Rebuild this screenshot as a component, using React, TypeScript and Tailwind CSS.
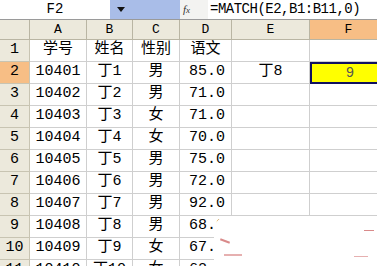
import React from "react";

const cols = [30, 57, 46, 47, 52, 78, 78];
const letters = ["A", "B", "C", "D", "E", "F"];

const data: string[][] = [
  ["学号", "姓名", "性别", "语文", "", ""],
  ["10401", "丁1", "男", "85.0", "丁8", "9"],
  ["10402", "丁2", "男", "71.0", "", ""],
  ["10403", "丁3", "女", "71.0", "", ""],
  ["10404", "丁4", "女", "70.0", "", ""],
  ["10405", "丁5", "男", "75.0", "", ""],
  ["10406", "丁6", "男", "72.0", "", ""],
  ["10407", "丁7", "男", "92.0", "", ""],
  ["10408", "丁8", "男", "68.0", "", ""],
  ["10409", "丁9", "女", "67.0", "", ""],
  ["10410", "丁10", "女", "62.0", "", ""],
];

const font = { fontFamily: '"Liberation Mono", "Noto Sans CJK SC", monospace' };

export default function App() {
  return (
    <div className="relative w-[377px] h-[266px] overflow-hidden bg-white text-black" style={font}>
      {/* formula bar */}
      <div className="flex h-[20px] border-b border-[#9a9a9a]">
        <div className="w-[110px] flex items-center justify-center text-[14px] bg-white">F2</div>
        <div className="w-[70px] bg-[#a9bde8] flex items-center pl-[7px]">
          <svg width="8" height="5" viewBox="0 0 8 5"><path d="M0 0h8L4 5z" fill="#111" /></svg>
        </div>
        <div className="w-[28px] flex items-center pl-[3px] bg-[#f3f3f1]">
          <span className="italic text-[11px] text-[#333]" style={{ fontFamily: '"Liberation Serif", serif' }}>
            f<span className="text-[9px]">x</span>
          </span>
        </div>
        <div className="flex-1 flex items-center pl-[2px] text-[14px] whitespace-nowrap tracking-[-0.5px]">
          =MATCH(E2,B1:B11,0)
        </div>
      </div>
      {/* header row */}
      <div className="flex h-[20px]">
        {cols.map((w, i) => (
          <div
            key={i}
            style={{ width: w, minWidth: w }}
            className={`flex items-center justify-center text-[13px] border-r border-b border-[#b9b5a3] ${
              i === 6 ? "bg-[#f7be85]" : "bg-[#ece9dc]"
            }`}
          >
            {i === 0 ? "" : letters[i - 1]}
          </div>
        ))}
      </div>
      {data.map((row, r) => (
        <div key={r} className="flex h-[22px]">
          <div
            style={{ width: cols[0], minWidth: cols[0] }}
            className={`flex items-center justify-center text-[15px] border-r border-b border-[#c8c4b2] ${
              r === 1 ? "bg-[#f7be85]" : "bg-[#ece9dc]"
            }`}
          >
            {r + 1}
          </div>
          {row.map((v, c) => {
            const w = cols[c + 1];
            const isSel = r === 1 && c === 5;
            if (isSel) {
              return (
                <div
                  key={c}
                  style={{ width: w, minWidth: w }}
                  className="flex items-center justify-center text-[14px] text-[#555] bg-[#ffff00] border-2 border-[#101060] border-r-0"
                >
                  {v}
                </div>
              );
            }
            return (
              <div
                key={c}
                style={{ width: w, minWidth: w }}
                className={`flex items-center text-[15px] border-r border-b border-[#cfcfcf] whitespace-nowrap ${
                  c === 3 && r > 0 ? "justify-end pr-[6px]" : "justify-center"
                }`}
              >
                {v}
              </div>
            );
          })}
        </div>
      ))}
      {/* erased overlay */}
      <div className="absolute left-[214px] top-[216px] w-[170px] h-[60px] bg-white rounded-l-[14px]">
        <div className="absolute left-[6px] top-[24px] w-[10px] h-[2px] bg-[#d98a8a] rotate-[20deg]" />
        <div className="absolute left-[10px] top-[38px] w-[18px] h-[2px] bg-[#e6b0b0]" />
        <div className="absolute left-[150px] top-[14px] w-[10px] h-[1px] bg-[#d98a8a]" />
        <div className="absolute left-[140px] top-[40px] w-[14px] h-[1px] bg-[#e6b0b0]" />
      </div>
    </div>
  );
}
